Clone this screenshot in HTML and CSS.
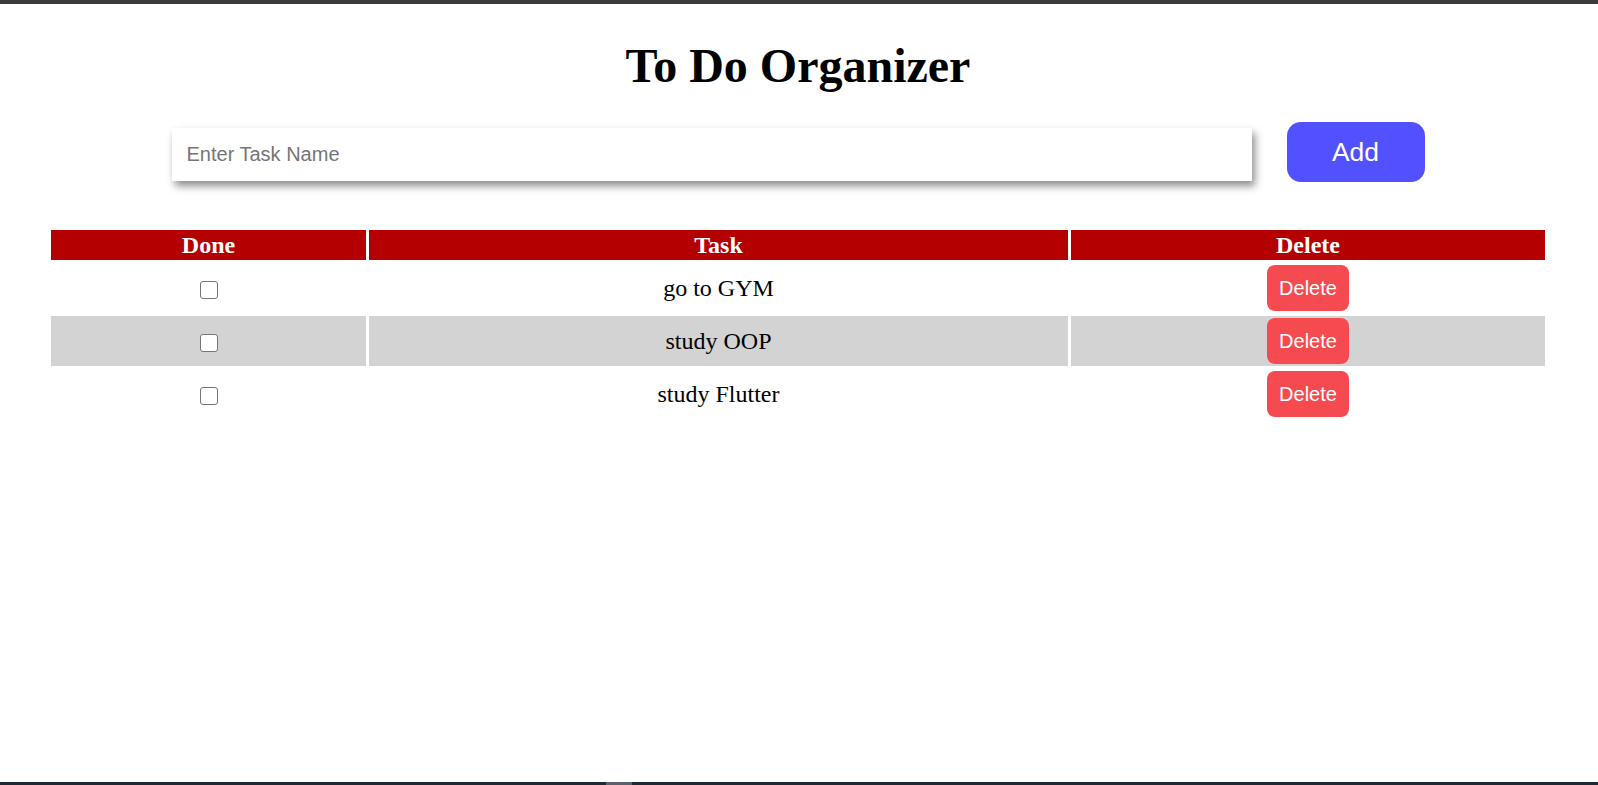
FILE: index.html
```html
<!DOCTYPE html>
<html lang="en">
<head>
<meta charset="utf-8">
<title>To Do Organizer</title>
<link rel="stylesheet" href="styles.css">
</head>
<body>
<div class="topbar"></div>
<main class="app">
  <h1 class="title">To Do Organizer</h1>
  <div class="form">
    <input class="task-input" type="text" placeholder="Enter Task Name">
    <button class="add-btn">Add</button>
  </div>
  <table class="tasks">
    <thead>
      <tr>
        <th class="col-done">Done</th>
        <th class="col-task">Task</th>
        <th class="col-del">Delete</th>
      </tr>
    </thead>
    <tbody>
      <tr>
        <td><input class="check" type="checkbox"></td>
        <td>go to GYM</td>
        <td><button class="del-btn">Delete</button></td>
      </tr>
      <tr>
        <td><input class="check" type="checkbox"></td>
        <td>study OOP</td>
        <td><button class="del-btn">Delete</button></td>
      </tr>
      <tr>
        <td><input class="check" type="checkbox"></td>
        <td>study Flutter</td>
        <td><button class="del-btn">Delete</button></td>
      </tr>
    </tbody>
  </table>
</main>
<div class="bottombar"><span class="bottom-seg"></span></div>
</body>
</html>
```

FILE: styles.css
```css
html, body {
  margin: 0;
  padding: 0;
  height: 100%;
}

body {
  display: flex;
  flex-direction: column;
  background: #ffffff;
  font-family: "Liberation Serif", "Times New Roman", serif;
  color: #000;
}

.topbar {
  height: 4px;
  background: #3b3b3d;
  flex: none;
}

.app {
  flex: 1;
  padding-right: 2px;
}

.title {
  margin: 35px 0 30px;
  font-size: 48px;
  line-height: 53px;
  font-weight: bold;
  text-align: center;
}

.form {
  display: flex;
  justify-content: center;
  align-items: flex-start;
  gap: 35px;
  margin-bottom: 45px;
}

.task-input {
  width: 1080px;
  height: 53px;
  margin-top: 6px;
  box-sizing: border-box;
  border: none;
  outline: none;
  padding: 0 15px;
  font-family: "Liberation Sans", Arial, sans-serif;
  font-size: 20px;
  color: #000;
  background: #fff;
  box-shadow: 3px 5px 8px rgba(0, 0, 0, 0.45);
}

.task-input::placeholder {
  color: #757575;
}

.add-btn {
  width: 138px;
  height: 60px;
  border: none;
  border-radius: 14px;
  background: #5151ff;
  color: #fff;
  font-family: "Liberation Sans", Arial, sans-serif;
  font-size: 26.4px;
  padding: 0;
}

.tasks {
  width: 1500px;
  margin: 0 auto;
  border-collapse: separate;
  border-spacing: 3px;
  table-layout: fixed;
}

.col-done { width: 315px; }
.col-task { width: 699px; }
.col-del { width: 474px; }

.tasks th {
  background: #b40000;
  color: #fff;
  font-size: 24px;
  font-weight: bold;
  height: 30px;
  line-height: 30px;
  padding: 0;
  text-align: center;
}

.tasks td {
  height: 50px;
  padding: 0;
  font-size: 24px;
  text-align: center;
  vertical-align: middle;
}

.tasks tbody tr:nth-child(even) td {
  background: #d3d3d3;
}

.check {
  appearance: none;
  -webkit-appearance: none;
  width: 18px;
  height: 18px;
  margin: 0;
  box-sizing: border-box;
  border: 1.5px solid #767676;
  border-radius: 3px;
  background: #fff;
  vertical-align: middle;
}

.del-btn {
  width: 82px;
  height: 46px;
  border: none;
  border-radius: 8px;
  background: #f54a50;
  color: #fff;
  font-family: "Liberation Sans", Arial, sans-serif;
  font-size: 20px;
  padding: 0;
  vertical-align: middle;
}

.bottombar {
  flex: none;
  height: 3px;
  background: #1f2933;
  display: flex;
}

.bottom-seg {
  width: 26px;
  margin-left: 606px;
  background: #5a616b;
}
```
